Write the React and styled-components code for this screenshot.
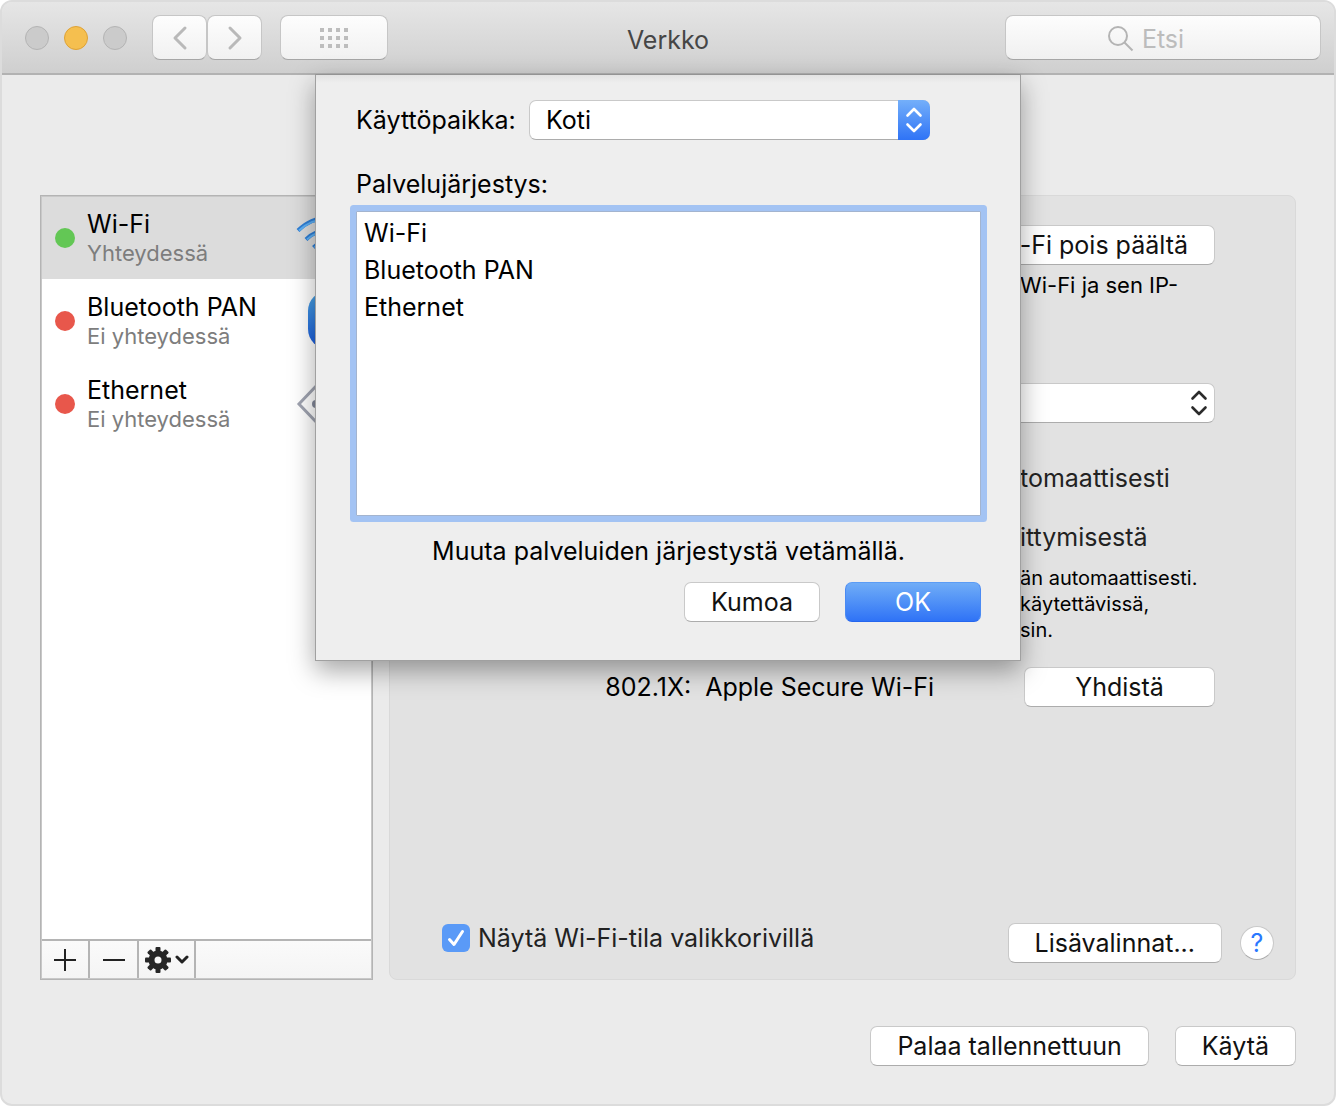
import React, {useState} from 'react';
import styled, {createGlobalStyle} from 'styled-components';

const GlobalStyle = createGlobalStyle`
    * {
        box-sizing: border-box;
    }
    body {
        margin: 0;
        background: #fff;
        color: #000;
        font-family: Inter, "Liberation Sans", sans-serif;
        font-size: 25px;
        line-height: 30px;
    }
    button, input, select {
        font: inherit;
        color: inherit;
    }
    ul, p, h1, h2 {
        margin: 0;
        padding: 0;
    }
`;

const Window = styled.div`
    position: relative;
    min-height: 100vh;
    display: flex;
    flex-direction: column;
    border: 2px solid #dcdcdc;
    border-radius: 12px;
    background: #ebebeb;
`;

const TitleBar = styled.header`
    height: 73px;
    padding: 0 13px;
    display: grid;
    grid-template-columns: 1fr auto 1fr;
    align-items: center;
    border-bottom: 2px solid #b2b2b2;
    border-radius: 10px 10px 0 0;
    background: linear-gradient(#e6e6e6, #cfcfcf);
`;

const Title = styled.h1`
    padding-top: 4px;
    font-size: 25px;
    font-weight: 400;
    color: #464646;
`;

const Tools = styled.div`
    display: flex;
    align-items: center;
`;

const Lights = styled.div`
    display: flex;
    gap: 15px;
    margin: 0 25px 0 10px;
`;

const Light = styled.button`
    width: 24px;
    height: 24px;
    padding: 0;
    border-radius: 50%;
    border: 1px solid ${p=>p.$active ? '#dea236' : '#b4b4b4'};
    background: ${p=>p.$active ? '#f5bf4f' : '#cbcbcb'};
`;

const ToolButton = styled.button`
    width: ${p=>p.$wide ? 108 : 55}px;
    height: 45px;
    margin-left: ${p=>p.$wide ? 18 : 0}px;
    padding: 0;
    display: flex;
    align-items: center;
    justify-content: center;
    border: 1px solid #c6c6c6;
    border-bottom-color: #a6a6a6;
    border-radius: 8px;
    background: linear-gradient(#fdfdfd, #f1f1f1);
`;

const Search = styled.label`
    position: relative;
    justify-self: end;
    width: 316px;
    svg {
        position: absolute;
        left: 103px;
        top: 11px;
    }
`;

const SearchInput = styled.input`
    display: block;
    width: 100%;
    height: 45px;
    padding: 2px 0 0;
    text-align: center;
    border: 1px solid #c6c6c6;
    border-bottom-color: #a6a6a6;
    border-radius: 8px;
    background: linear-gradient(#fdfdfd, #f0f0f0);
    &::placeholder {
        color: #bcbcbc;
        opacity: 1;
    }
`;

const Body = styled.main`
    flex: 1;
    display: flex;
    gap: 16px;
    padding: 120px 38px 0;
`;

const Sidebar = styled.aside`
    width: 333px;
    flex: none;
    display: flex;
    flex-direction: column;
    border: 1px solid #b4b4b4;
    outline: 1px solid #c8c8c8;
    outline-offset: -2px;
    background: #fff;
`;

const Services = styled.ul`
    flex: 1;
    list-style: none;
`;

const Service = styled.li`
    height: 83px;
    padding: 0 12px 0 14px;
    display: flex;
    align-items: center;
    background: ${p=>p.$selected ? '#dcdcdc' : 'transparent'};
    svg {
        margin-left: auto;
        flex: none;
    }
`;

const Status = styled.span`
    width: 20px;
    height: 20px;
    margin-right: 12px;
    border-radius: 50%;
    background: ${p=>p.$on ? '#63c755' : '#e8574b'};
`;

const State = styled.div`
    font-size: 22px;
    line-height: 28px;
    color: #7d7d7d;
`;

const ListTools = styled.div`
    display: flex;
    height: 40px;
    border-top: 2px solid #b4b4b4;
    background: linear-gradient(#fafafa, #f4f4f4);
`;

const ListTool = styled.button`
    width: ${p=>p.$menu ? 57 : 49}px;
    padding: 0;
    display: flex;
    align-items: center;
    justify-content: center;
    gap: 4px;
    border: 0;
    border-right: 2px solid #b4b4b4;
    background: none;
`;

const Panel = styled.section`
    flex: 1;
    display: flex;
    flex-direction: column;
    padding-top: 29px;
    border: 1px solid #d9d9d9;
    border-radius: 8px;
    background: #e2e2e2;
`;

const Details = styled.div`
    flex: 1;
    padding-right: 80px;
    display: flex;
    flex-direction: column;
    align-items: flex-end;
`;

const Notes = styled.div`
    width: 195px;
    white-space: nowrap;
`;

const Hint = styled.p`
    padding-top: 7px;
    font-size: 22px;
    line-height: 26px;
`;

const Option = styled.p`
    margin-bottom: 29px;
    color: #222;
`;

const Remarks = styled.p`
    margin: -16px 0 24px;
    font-size: 20px;
    line-height: 26px;
`;

const Button = styled.button`
    height: 40px;
    min-width: ${p=>p.$width || 0}px;
    padding: 0 26px;
    white-space: nowrap;
    border: 1px solid #c9c9c9;
    border-bottom-color: #acacac;
    border-radius: 7px;
    background: #fff;
    color: #111;
`;

const PrimaryButton = styled(Button)`
    border-color: #5b9cf5 #4a8af3 #2566ee;
    background: linear-gradient(#70adf7, #2f73f6);
    color: #fff;
`;

const PopUp = styled.div`
    position: relative;
    width: ${p=>p.$width}px;
    margin-top: ${p=>p.$top || 0}px;
    margin-bottom: ${p=>p.$bottom || 0}px;
`;

const Select = styled.select`
    display: block;
    width: 100%;
    height: 40px;
    padding: 0 40px 0 16px;
    appearance: none;
    border: 1px solid #c9c9c9;
    border-bottom-color: #acacac;
    border-radius: 7px;
    background: #fff;
`;

const Arrows = styled.span`
    position: absolute;
    top: 0;
    right: 0;
    width: 32px;
    height: 40px;
    display: flex;
    align-items: center;
    justify-content: center;
    border-radius: 0 7px 7px 0;
    color: ${p=>p.$blue ? '#fff' : '#2b2b2b'};
    background: ${p=>p.$blue ? 'linear-gradient(#74affa, #2f73f6)' : 'none'};
    pointer-events: none;
`;

const Security = styled.div`
    align-self: stretch;
    display: flex;
    align-items: center;
    justify-content: flex-end;
    gap: 14px;
    ${Button} {
        margin-left: 76px;
    }
`;

const PanelFooter = styled.div`
    padding: 0 21px 16px 52px;
    display: flex;
    align-items: center;
    gap: 18px;
`;

const CheckLabel = styled.label`
    flex: 1;
    display: flex;
    align-items: center;
    gap: 8px;
    padding-bottom: 10px;
    color: #222;
`;

const Check = styled.input`
    appearance: none;
    width: 28px;
    height: 28px;
    margin: 0;
    border-radius: 6px;
    background: #fff;
    &:checked {
        background: #5a9af7 url("data:image/svg+xml,%3Csvg xmlns='http://www.w3.org/2000/svg' viewBox='0 0 28 28'%3E%3Cpath d='M7.500 15.500l4.500 5L20.500 7.500' fill='none' stroke='white' stroke-width='3' stroke-linecap='round' stroke-linejoin='round'/%3E%3C/svg%3E");
    }
`;

const Help = styled.button`
    width: 34px;
    height: 34px;
    padding: 0;
    border: 1px solid #c9c9c9;
    border-bottom-color: #acacac;
    border-radius: 50%;
    background: #fff;
    color: #2a78ff;
`;

const Actions = styled.footer`
    display: flex;
    justify-content: flex-end;
    gap: 26px;
    padding: 46px 38px 38px;
`;

const Sheet = styled.form`
    position: absolute;
    top: 72px;
    left: 50%;
    transform: translateX(-50%);
    width: 706px;
    padding: 25px 39px 38px 40px;
    border: 1px solid #a0a0a0;
    border-top-color: #939393;
    background: linear-gradient(#e2e2e2, #eee 8px);
    box-shadow: 0 10px 24px rgba(0, 0, 0, .35);
`;

const Location = styled.div`
    display: flex;
    align-items: center;
    justify-content: space-between;
    padding-right: 51px;
`;

const Caption = styled.h2`
    margin: 29px 0 12px;
    font-size: 25px;
    font-weight: 400;
`;

const OrderList = styled.ul`
    height: 305px;
    padding: 3px 7px;
    list-style: none;
    line-height: 37px;
    border: 1px solid #a3b4cf;
    border-radius: 1px;
    background: #fff;
    box-shadow: 0 0 0 6px #a3c3f3;
`;

const Tip = styled.p`
    margin: 20px 0 16px;
    text-align: center;
`;

const SheetActions = styled.div`
    display: flex;
    justify-content: flex-end;
    gap: 25px;
`;

const Chevrons = () => (
    <svg width="18" height="26" viewBox="0 0 18 26" fill="none" stroke="currentColor" strokeWidth="2.600" strokeLinecap="round" strokeLinejoin="round">
        <path d="M2.500 8.500L9 2l6.500 6.500M2.500 17.500L9 24l6.500-6.500" />
    </svg>
);

const WifiIcon = () => (
    <svg width="64" height="60" viewBox="0 0 64 60" fill="none" stroke="#2f7fd6" strokeLinecap="butt">
        <g strokeWidth="4">
            <path d="M2 22.500A42 42 0 0 1 62 22.500" />
            <path d="M10 31.500A31 31 0 0 1 54 31.500" />
            <path d="M17.500 39.500A20 20 0 0 1 46.500 39.500" />
        </g>
        <g strokeWidth="2" stroke="#5fb1f5">
            <path d="M3 22.500A42 42 0 0 1 61 22.500" />
            <path d="M11 31.500A31 31 0 0 1 53 31.500" />
            <path d="M18.500 39.500A20 20 0 0 1 45.500 39.500" />
        </g>
        <circle cx="32" cy="50" r="4" fill="#4aa0f0" />
    </svg>
);

const BluetoothIcon = () => (
    <svg width="64" height="60" viewBox="0 0 64 60" fill="none">
        <defs>
            <linearGradient id="bt" x1="0" y1="0" x2="0" y2="1">
                <stop offset="0" stopColor="#4aa5e4" />
                <stop offset="1" stopColor="#1858dc" />
            </linearGradient>
        </defs>
        <rect x="12" y="0" width="40" height="58" rx="20" fill="url(#bt)" />
        <path d="M22 20l19 19-9 9V12l9 9-19 19" stroke="#fff" strokeWidth="3" />
    </svg>
);

const EthernetIcon = () => (
    <svg width="64" height="60" viewBox="0 0 64 60" fill="none" stroke="#9fa3b0" strokeWidth="3">
        <path d="M23 9L3 30l20 21M41 9l20 21-20 21" />
        <g fill="#83899a" stroke="none">
            <circle cx="20" cy="30" r="4" />
            <circle cx="32" cy="30" r="4" />
            <circle cx="44" cy="30" r="4" />
        </g>
    </svg>
);

const Gear = () => (
    <svg width="26" height="26" viewBox="-13 -13 26 26">
        {[0, 45, 90, 135].map(a => (
            <rect key={a} x="-2.500" y="-13" width="5" height="26" rx="1" fill="#262626" transform={`rotate(${a})`} />
        ))}
        <circle r="6.500" fill="none" stroke="#262626" strokeWidth="6" />
        <circle r="3.500" fill="#f7f7f7" />
    </svg>
);

const services = [
    {name: 'Wi-Fi', state: 'Yhteydessä', on: true, Icon: WifiIcon},
    {name: 'Bluetooth PAN', state: 'Ei yhteydessä', on: false, Icon: BluetoothIcon},
    {name: 'Ethernet', state: 'Ei yhteydessä', on: false, Icon: EthernetIcon},
];

const NetworkTitleBar = () => (
    <TitleBar>
        <Tools>
            <Lights>
                <Light aria-label="Sulje" />
                <Light aria-label="Pienennä" $active />
                <Light aria-label="Suurenna" />
            </Lights>
            <ToolButton aria-label="Takaisin">
                <svg width="16" height="26" fill="none" stroke="#b9b9b9" strokeWidth="3" strokeLinecap="round" strokeLinejoin="round"><path d="M13 3L3 13l10 10" /></svg>
            </ToolButton>
            <ToolButton aria-label="Eteenpäin">
                <svg width="16" height="26" fill="none" stroke="#b9b9b9" strokeWidth="3" strokeLinecap="round" strokeLinejoin="round"><path d="M3 3l10 10L3 23" /></svg>
            </ToolButton>
            <ToolButton aria-label="Näytä kaikki" $wide>
                <svg width="28" height="20" fill="#bdbdbd">
                    {[0, 8, 16].map(y => [0, 8, 16, 24].map(x => (
                        <rect key={`${x}-${y}`} x={x} y={y} width="4" height="4" />
                    )))}
                </svg>
            </ToolButton>
        </Tools>
        <Title>Verkko</Title>
        <Search>
            <SearchInput type="text" placeholder="Etsi" aria-label="Etsi" />
            <svg width="26" height="26" fill="none" stroke="#b4b4b4" strokeWidth="2">
                <circle cx="10" cy="10" r="9" />
                <path d="M16.500 16.500L24.500 24.500" />
            </svg>
        </Search>
    </TitleBar>
);

const ServiceSidebar = () => (
    <Sidebar>
        <Services>
            {services.map(({name, state, on, Icon}) => (
                <Service key={name} $selected={on}>
                    <Status $on={on} />
                    <div>
                        {name}
                        <State>{state}</State>
                    </div>
                    <Icon />
                </Service>
            ))}
        </Services>
        <ListTools>
            <ListTool aria-label="Lisää">
                <svg width="22" height="22" stroke="#222" strokeWidth="2"><path d="M0 11h22M11 0v22" /></svg>
            </ListTool>
            <ListTool aria-label="Poista">
                <svg width="22" height="22" stroke="#222" strokeWidth="2"><path d="M0 11h22" /></svg>
            </ListTool>
            <ListTool aria-label="Toiminnot" $menu>
                <Gear />
                <svg width="14" height="10" fill="none" stroke="#222" strokeWidth="3" strokeLinecap="round" strokeLinejoin="round"><path d="M2 2l5 5 5-5" /></svg>
            </ListTool>
        </ListTools>
    </Sidebar>
);

const OrderSheet = () => (
    <Sheet role="dialog" aria-label="Palvelujärjestys" onSubmit={e => e.preventDefault()}>
        <Location>
            <label htmlFor="location">Käyttöpaikka:</label>
            <PopUp $width={401}>
                <Select id="location">
                    <option>Koti</option>
                </Select>
                <Arrows $blue><Chevrons /></Arrows>
            </PopUp>
        </Location>
        <Caption id="order">Palvelujärjestys:</Caption>
        <OrderList aria-labelledby="order">
            {services.map(({name}) => <li key={name}>{name}</li>)}
        </OrderList>
        <Tip>Muuta palveluiden järjestystä vetämällä.</Tip>
        <SheetActions>
            <Button type="button" $width={136}>Kumoa</Button>
            <PrimaryButton type="submit" $width={136}>OK</PrimaryButton>
        </SheetActions>
    </Sheet>
);

const App = () => {
    const [inMenuBar, setInMenuBar] = useState(true);

    return (
        <>
            <GlobalStyle />
            <Window>
                <NetworkTitleBar />
                <Body>
                    <ServiceSidebar />
                    <Panel>
                        <Details>
                            <Button>Wi-Fi pois päältä</Button>
                            <Notes>
                                <Hint>Wi-Fi ja sen IP-</Hint>
                            </Notes>
                            <PopUp $width={440} $top={85} $bottom={40}>
                                <Select aria-label="Verkon nimi" />
                                <Arrows><Chevrons /></Arrows>
                            </PopUp>
                            <Notes>
                                <Option>tomaattisesti</Option>
                                <Option>ittymisestä</Option>
                                <Remarks>
                                    än automaattisesti.<br />
                                    käytettävissä,<br />
                                    sin.
                                </Remarks>
                            </Notes>
                            <Security>
                                <span>802.1X:</span>
                                <span>Apple Secure Wi-Fi</span>
                                <Button $width={191}>Yhdistä</Button>
                            </Security>
                        </Details>
                        <PanelFooter>
                            <CheckLabel>
                                <Check type="checkbox" checked={inMenuBar} onChange={e => setInMenuBar(e.target.checked)} />
                                Näytä Wi-Fi-tila valikkorivillä
                            </CheckLabel>
                            <Button>Lisävalinnat...</Button>
                            <Help aria-label="Ohje">?</Help>
                        </PanelFooter>
                    </Panel>
                </Body>
                <Actions>
                    <Button>Palaa tallennettuun</Button>
                    <Button>Käytä</Button>
                </Actions>
                <OrderSheet />
            </Window>
        </>
    );
}

export default App;
